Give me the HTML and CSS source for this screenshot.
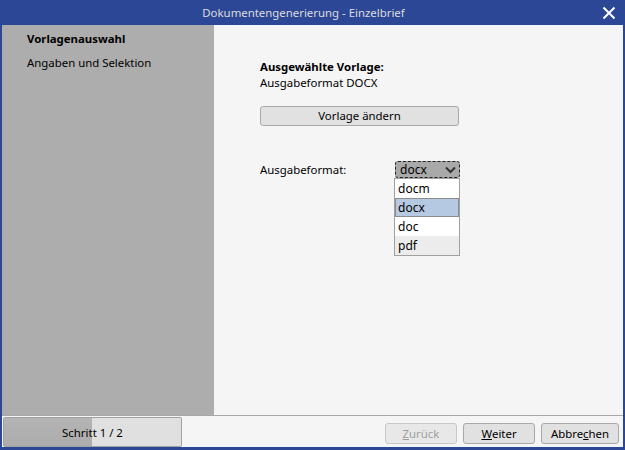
FILE: index.html
```html
<!DOCTYPE html>
<html lang="de">
<head>
<meta charset="utf-8">
<link rel="stylesheet" href="styles.css">
</head>
<body>
<div class="window">
  <div class="titlebar">
    <span class="title">Dokumentengenerierung - Einzelbrief</span>
    <svg class="close" width="14" height="14" viewBox="0 0 14 14"><path d="M1.5 1.5L12.5 12.5M12.5 1.5L1.5 12.5" stroke="#fff" stroke-width="2" fill="none"/></svg>
  </div>
  <div class="main">
    <div class="sidebar">
      <div class="step active">Vorlagenauswahl</div>
      <div class="step">Angaben und Selektion</div>
    </div>
    <div class="content">
      <div class="label-bold">Ausgewählte Vorlage:</div>
      <div class="label">Ausgabeformat DOCX</div>
      <div class="btn wide">Vorlage ändern</div>
      <div class="format-row">
        <div class="format-label">Ausgabeformat:</div>
        <div class="combo">
          <div class="select">
            <span>docx</span>
            <svg width="11" height="8" viewBox="0 0 11 8"><path d="M1 1.5L5.5 6L10 1.5" stroke="#333" stroke-width="2" fill="none"/></svg>
          </div>
          <div class="list">
            <div class="opt">docm</div>
            <div class="opt sel">docx</div>
            <div class="opt">doc</div>
            <div class="opt alt">pdf</div>
          </div>
        </div>
      </div>
    </div>
  </div>
  <div class="footer">
    <div class="progress"><div class="fill"></div><span class="ptext">Schritt 1 / 2</span></div>
    <div class="buttons">
      <div class="btn fbtn disabled"><u>Z</u>urück</div>
      <div class="btn fbtn"><u>W</u>eiter</div>
      <div class="btn fbtn"><span>Abbre<u>c</u>hen</span></div>
    </div>
  </div>
</div>
</body>
</html>
```
FILE: styles.css
```css
html, body { margin: 0; padding: 0; }
body {
  width: 625px; height: 450px; overflow: hidden;
  font-family: "Noto Sans", "Open Sans", sans-serif;
  font-size: 11.4px; color: #000;
}
.window {
  width: 625px; height: 450px; box-sizing: border-box;
  background: #2d4797;
  padding: 0 2px 3px 2px;
  display: flex; flex-direction: column;
}
.titlebar {
  height: 25px; flex: none;
  display: flex; align-items: center; justify-content: center;
  position: relative;
  color: #dcdcdc;
}
.title { margin-right: 18px; }
.close { position: absolute; right: 7px; top: 6px; }
.main {
  flex: 1; display: flex; background: #f5f5f5;
  border-bottom: 1px solid #a8a8a8;
}
.sidebar {
  width: 212px; background: #adadad; flex: none;
  padding: 6px 0 0 25px; box-sizing: border-box;
}
.step { height: 24px; line-height: 16px; }
.step.active { font-weight: bold; }
.content { flex: 1; padding: 34px 0 0 46px; }
.label-bold { font-weight: bold; line-height: 16px; }
.label { line-height: 16px; }
.btn {
  box-sizing: border-box; height: 20px;
  border: 1px solid #a9a9a9; border-radius: 3px;
  background: #e1e1e1;
  display: flex; align-items: center; justify-content: center;
  line-height: 16px;
}
.wide { width: 199px; margin-top: 15px; }
.format-row { display: flex; margin-top: 35px; }
.format-label { width: 134px; padding-top: 1px; }
.combo { width: 66px; }
.select {
  box-sizing: border-box; height: 17px; margin-left: 1px; width: 65px;
  background: #a9a9a9; border: 1px dashed #222; border-radius: 3px;
  display: flex; align-items: center; justify-content: space-between;
  padding: 0 3px 0 4px; line-height: 14px; font-size: 12px;
}
.list {
  box-sizing: border-box; border: 1px solid #a0a0a0; background: #fff;
}
.opt { height: 19px; line-height: 19px; padding-left: 3px; box-sizing: border-box; font-size: 12px; }
.opt.sel { background: #b6c9e2; border: 1px solid #8c8c8c; line-height: 17px; padding-left: 2px; }
.opt.alt { background: #ececec; }
.footer {
  height: 31px; flex: none; background: #f5f5f5;
  display: flex; align-items: stretch;
}
.progress {
  width: 179px; margin: 1px 0 0 1px; box-sizing: border-box;
  border: 1px solid #a0a0a0; border-radius: 2px;
  background: #e0e0e0; position: relative;
  display: flex; align-items: center; justify-content: center;
}
.fill { position: absolute; left: 0; top: 0; bottom: 0; width: 88px; background: linear-gradient(#b4b4b4, #acacac); }
.ptext { position: relative; }
.buttons { flex: 1; display: flex; justify-content: flex-end; gap: 6px; padding: 7px 4px 0 0; }
.fbtn { width: 72px; height: 21px; }
.fbtn:last-child { width: 78px; }
.fbtn.disabled { color: #a0a0a0; border-color: #c8c8c8; background: #e8e8e8; }
```
